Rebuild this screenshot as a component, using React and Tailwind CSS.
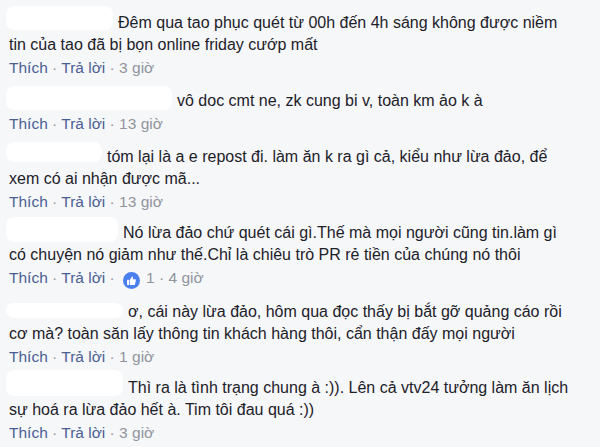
import React from 'react';

const comments = [
    {
        box: 'w-[107px] h-[24px] align-[-2px]',
        lines: ['Đêm qua tao phục quét từ 00h đến 4h sáng không được niềm', 'tin của tao đã bị bọn online friday cướp mất'],
        time: '3 giờ',
        mb: 'mb-[11px]',
    },
    {
        box: 'w-[166px] h-[24px] align-[-4px]',
        lines: ['vô doc cmt ne, zk cung bi v, toàn km ảo k à'],
        time: '13 giờ',
        mb: 'mb-[11px]',
    },
    {
        box: 'w-[96px] h-[20px] align-[0px]',
        lines: ['tóm lại là a e repost đi. làm ăn k ra gì cả, kiểu như lừa đảo, để', 'xem có ai nhận được mã...'],
        time: '13 giờ',
        mb: 'mb-[9px]',
    },
    {
        box: 'w-[112px] h-[25px] align-[-4px]',
        lines: ['Nó lừa đảo chứ quét cái gì.Thế mà mọi người cũng tin.làm gì', 'có chuyện nó giảm như thế.Chỉ là chiêu trò PR rẻ tiền của chúng nó thôi'],
        time: '4 giờ',
        likes: 1,
        mb: 'mb-[12px]',
    },
    {
        box: 'w-[117px] h-[15px] align-[-1px]',
        lines: ['ơ, cái này lừa đảo, hôm qua đọc thấy bị bắt gỡ quảng cáo rồi', 'cơ mà? toàn săn lấy thông tin khách hàng thôi, cẩn thận đấy mọi người'],
        time: '1 giờ',
        mb: 'mb-[9px]',
    },
    {
        box: 'w-[117px] h-[26px] align-[-3px]',
        lines: ['Thì ra là tình trạng chung à :)). Lên cả vtv24 tưởng làm ăn lịch', 'sự hoá ra lừa đảo hết à. Tim tôi đau quá :))'],
        time: '3 giờ',
        mb: 'mb-0',
    },
];

const LikeBadge = () => (
    <span className="inline-flex w-[17px] h-[17px] rounded-full bg-[#4a7ff0] items-center justify-center align-[-3px] ml-[4px] mr-[6px]">
        <svg viewBox="0 0 16 16" className="w-[11px] h-[11px]" fill="#fff">
            <rect x="1.5" y="7" width="3" height="7.5" rx="0.6" />
            <path d="M5.5 7.2 8.4 2.6c.4-.7 1.6-.5 1.7.4l-.4 3.1h3.3c.9 0 1.5.8 1.3 1.6l-1.1 5.6c-.2.7-.7 1.1-1.4 1.1H5.5Z" />
        </svg>
    </span>
);

const Comment = ({ c }) => (
    <div className={c.mb}>
        <div className="text-[#1d2129] text-[16px] leading-[22px]">
            <span className={`inline-block bg-white rounded-[8px] mt-[-12px] ml-[-3px] mr-[5px] ${c.box}`} />
            {c.lines.map((l, i) => (
                <React.Fragment key={i}>
                    {i > 0 && <br />}
                    {l}
                </React.Fragment>
            ))}
        </div>
        <div className="text-[15.5px] leading-[22px] mt-[1px] whitespace-nowrap">
            <span className="text-[#4b5f94]">Thích</span>
            <span className="text-[#90949c]"> · </span>
            <span className="text-[#4b5f94]">Trả lời</span>
            <span className="text-[#90949c]"> · </span>
            {c.likes && (
                <>
                    <LikeBadge />
                    <span className="text-[#90949c]">{c.likes} · </span>
                </>
            )}
            <span className="text-[#90949c]">{c.time}</span>
        </div>
    </div>
);

export default function App() {
    return (
        <div className="w-[600px] h-[447px] overflow-hidden bg-[#f6f7f9] pl-[9px] pt-[12px] font-['Liberation_Sans',Arial,sans-serif]">
            {comments.map((c, i) => (
                <Comment key={i} c={c} />
            ))}
        </div>
    );
}
